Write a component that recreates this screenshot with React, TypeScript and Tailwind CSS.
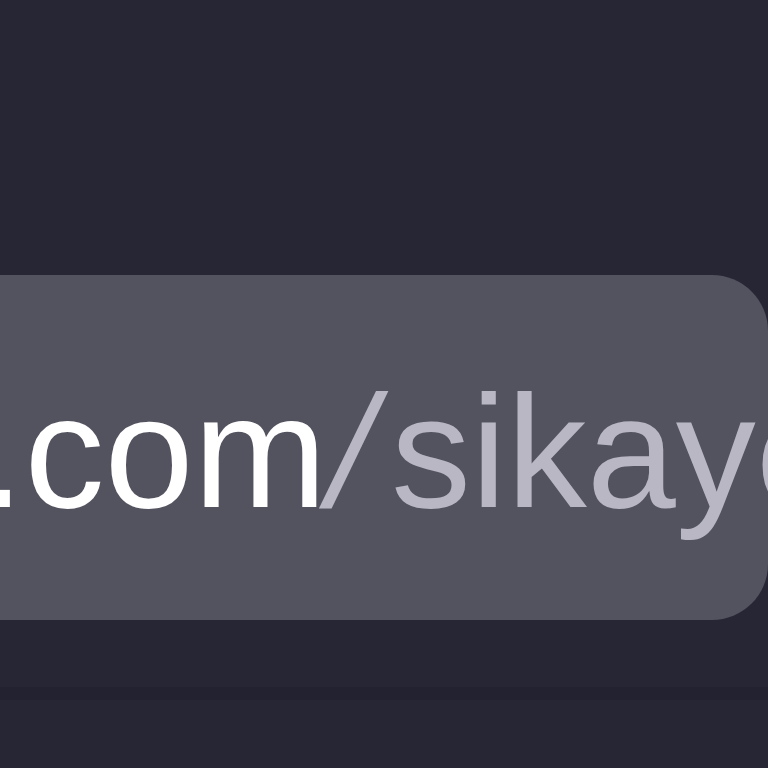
export default function App() {
  return (
    <div className="flex h-[768px] w-[768px] flex-col overflow-hidden bg-[#262635]">
      <div className="mt-[275px] h-[345px] w-full shrink-0 overflow-hidden rounded-r-[56px] bg-[#53525f]">
        <div
          className="ml-[-456px] whitespace-nowrap pt-[97px] text-[160px] leading-none"
          style={{ fontFamily: '"Liberation Sans", Arial, sans-serif' }}
        >
          <span className="text-white">github.com</span>
          <span className="ml-[4px] inline-block -skew-x-12 text-[#b8b7c3]">/</span>
          <span className="ml-[16px] text-[#b8b7c3]">sikayetvar</span>
        </div>
      </div>
      <div className="mt-[67px] h-[13px] w-full shrink-0 bg-[#222230]" />
    </div>
  );
}
